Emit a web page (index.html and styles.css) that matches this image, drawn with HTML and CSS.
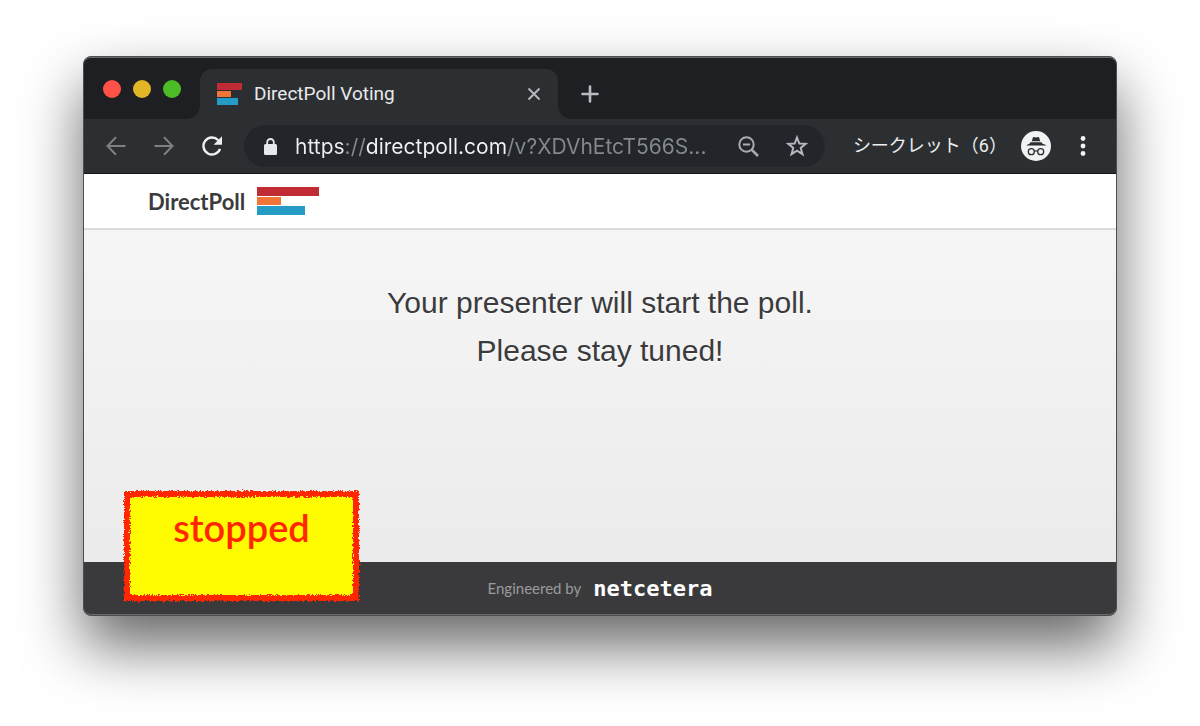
FILE: index.html
```html
<!DOCTYPE html>
<html lang="en">
<head>
    <meta charset="UTF-8">
    <meta name="viewport" content="width=device-width, initial-scale=1.0">
    <title>DirectPoll Voting</title>
    <link rel="stylesheet" href="styles.css">
</head>
<body>
    <div class="window">
        <div class="tabstrip">
            <div class="lights">
                <button class="light red" aria-label="Close window"></button>
                <button class="light yellow" aria-label="Minimize window"></button>
                <button class="light green" aria-label="Zoom window"></button>
            </div>
            <div class="tab">
                <svg class="favicon" width="25" height="22" viewBox="0 0 25 22">
                    <rect width="25" height="7" fill="#c12c34"/>
                    <rect y="8" width="14" height="6" fill="#f07536"/>
                    <rect y="15" width="21" height="7" fill="#259cc6"/>
                </svg>
                <span class="tab-title">DirectPoll Voting</span>
                <button class="icon-button" aria-label="Close tab">
                    <svg width="14" height="14" viewBox="0 0 14 14" fill="none" stroke="#b4b6ba" stroke-width="2"><path d="M1.5 1.5l11 11M12.5 1.5l-11 11"/></svg>
                </button>
            </div>
            <button class="icon-button" aria-label="New tab">
                <svg width="18" height="18" viewBox="0 0 18 18" fill="none" stroke="#b9bbc3" stroke-width="2.6" stroke-linecap="round"><path d="M9 1.5v15M1.5 9h15"/></svg>
            </button>
        </div>

        <div class="toolbar">
            <div class="nav">
                <button class="icon-button" aria-label="Back">
                    <svg width="20" height="20" viewBox="0 0 20 20" fill="none" stroke="#7e8184" stroke-width="2"><path d="M19.5 10H2M10 1.2L1.5 10l8.5 8.8"/></svg>
                </button>
                <button class="icon-button" aria-label="Forward">
                    <svg width="20" height="20" viewBox="0 0 20 20" fill="none" stroke="#7e8184" stroke-width="2"><path d="M.5 10H18M10 1.2L18.5 10 10 18.8"/></svg>
                </button>
                <button class="icon-button" aria-label="Reload">
                    <svg width="20" height="20" viewBox="0 0 20 20"><path d="M16.2 4.2A8.5 8.5 0 1 0 18 12.8" fill="none" stroke="#eef0f1" stroke-width="2.4"/><path d="M20 .3v8.4h-8.400z" fill="#eef0f1"/></svg>
                </button>
            </div>
            <div class="omnibox">
                <svg class="lock" width="13" height="17" viewBox="0 0 13 17"><rect y="6" width="13" height="11" rx="1.5" fill="#e6e8ec"/><path d="M3.2 7V4.3a3.3 3.3 0 0 1 6.6 0V7" fill="none" stroke="#e6e8ec" stroke-width="1.8"/></svg>
                <input class="url" type="text" value="https://directpoll.com/v?XDVhEtcT566S..." aria-label="Address" spellcheck="false">
                <button class="icon-button" aria-label="Page zoom">
                    <svg width="21" height="21" viewBox="0 0 21 21" fill="none" stroke="#a9acb1" stroke-width="2"><circle cx="8.5" cy="8.5" r="7.2"/><path d="M5 8.5h7"/><path d="M13.6 13.6l6.4 6.4" stroke-width="2.6"/></svg>
                </button>
                <button class="icon-button" aria-label="Bookmark">
                    <svg width="22" height="22" viewBox="0 0 22 22" fill="none" stroke="#b4b7bf" stroke-width="2"><path d="M11 2.5l2.3 6 6.5.3-5.1 4.1 1.8 6.3L11 15.6l-5.5 3.6 1.8-6.3-5.1-4.1 6.5-.3z"/></svg>
                </button>
            </div>
            <span class="incognito-label" lang="ja">シークレット（6）</span>
            <svg class="incognito" width="30" height="30" viewBox="0 0 30 30">
                <circle cx="15" cy="15" r="15" fill="#f1f3f3"/>
                <path d="M10.800 10.200l1-3.500q.3-.9 1.200-.6 2 .7 4 0 .9-.3 1.200.6l1 3.500z" fill="#2b2f32"/>
                <path d="M9.5 11.2h11l1 1.600q3 .6 3.800 1.700H5.500q.8-1.100 3-1.700z" fill="#2b2f32"/>
                <g fill="none" stroke="#2b2f32" stroke-width="1.3"><circle cx="10.300" cy="20.700" r="3"/><circle cx="19.700" cy="20.700" r="3"/><path d="M13.300 20.300q1.700-.9 3.400 0"/></g>
            </svg>
            <button class="icon-button" aria-label="Menu">
                <svg width="6" height="20" viewBox="0 0 6 20" fill="#f1f3f4"><circle cx="3" cy="2.5" r="2.4"/><circle cx="3" cy="10" r="2.4"/><circle cx="3" cy="17.5" r="2.4"/></svg>
            </button>
        </div>

        <header class="site-header">
            <a href="#" class="brand">
                <span>DirectPoll</span>
                <svg width="62" height="28" viewBox="0 0 62 28">
                    <rect width="62" height="9" fill="#c12c34"/>
                    <rect y="10" width="24" height="8" fill="#f07536"/>
                    <rect y="19" width="48" height="9" fill="#259cc6"/>
                </svg>
            </a>
        </header>

        <main class="content">
            <p class="message">Your presenter will start the poll.<br>Please stay tuned!</p>
        </main>

        <footer class="site-footer">
            <span>Engineered by</span>
            <a href="#" class="netcetera">netcetera</a>
        </footer>

        <!-- status note over the page -->
        <div class="note">
            <svg class="note-paper" width="100%" height="100%">
                <filter id="rough" x="-5%" y="-5%" width="110%" height="110%">
                    <feTurbulence type="fractalNoise" baseFrequency="0.6" numOctaves="2" seed="4" result="noise"/>
                    <feDisplacementMap in="SourceGraphic" in2="noise" scale="5" xChannelSelector="R" yChannelSelector="G"/>
                    <feGaussianBlur stdDeviation="0.3"/>
                </filter>
                <rect class="note-edge" width="100%" height="100%" filter="url(#rough)"/>
            </svg>
            <span class="note-text">stopped</span>
        </div>
    </div>
</body>
</html>
```
FILE: styles.css
```css
* {
    margin: 0;
    padding: 0;
    box-sizing: border-box;
}
body {
    display: flex;
    min-height: 100vh;
    padding: 56px 83px 110px;
    background: #fff;
    font-family: Roboto, "Noto Sans CJK JP", sans-serif;
    overflow: hidden;
}
button {
    border: none;
    background: none;
    cursor: pointer;
}
svg {
    display: block;
    flex: none;
}
.window {
    position: relative;
    flex: 1;
    display: flex;
    flex-direction: column;
    border: 1px solid #4b4e4f;
    border-radius: 8px;
    background: #3a3a3c;
    box-shadow: 0 30px 60px rgba(0, 0, 0, 0.6);
}

/* browser chrome */
.tabstrip {
    display: flex;
    align-items: flex-end;
    height: 62px;
    padding-left: 19px;
    background: #1e1f22;
    border-top: 1px solid #686b6c;
    border-radius: 7px 7px 0 0;
}
.lights {
    display: flex;
    gap: 12px;
    margin-right: 19px;
    padding-bottom: 21px;
}
.light {
    width: 18px;
    height: 18px;
    border-radius: 50%;
}
.red {
    background: #ff5148;
}
.yellow {
    background: #e1b526;
}
.green {
    background: #4bbb27;
}
.tab {
    position: relative;
    display: flex;
    align-items: center;
    width: 358px;
    height: 50px;
    margin-right: 16px;
    padding: 0 8px 0 17px;
    background: #2c2f32;
    border-radius: 12px 12px 0 0;
}
.tab::before,
.tab::after {
    content: "";
    position: absolute;
    bottom: 0;
    width: 12px;
    height: 12px;
}
.tab::before {
    right: 100%;
    background: radial-gradient(circle at 0 0, transparent 11px, #2c2f32 12px);
}
.tab::after {
    left: 100%;
    background: radial-gradient(circle at 100% 0, transparent 11px, #2c2f32 12px);
}
.tab-title {
    flex: 1;
    margin-left: 12px;
    font-size: 19px;
    line-height: 24px;
    color: #e8e9eb;
}
.icon-button {
    display: flex;
    align-items: center;
    justify-content: center;
    flex: none;
    width: 32px;
    height: 32px;
}
.tabstrip > .icon-button {
    margin-bottom: 9px;
}
.toolbar {
    display: flex;
    align-items: center;
    height: 55px;
    padding: 0 17px 0 16px;
    background: #2c2f32;
    border-bottom: 1px solid #151617;
}
.nav {
    display: flex;
    gap: 16px;
    margin-right: 16px;
}
.omnibox {
    display: flex;
    align-items: center;
    flex: 1;
    height: 42px;
    padding: 0 12px 0 20px;
    background: #22262a;
    border-radius: 21px;
}
.url {
    flex: 1;
    min-width: 0;
    margin: 0 12px 0 18px;
    border: none;
    outline: none;
    font: 21px Inter, sans-serif;
    color: transparent;
    /* scheme and path are dimmed, the host stays bright */
    background: linear-gradient(90deg, #eceef0 51px, #85898d 51px, #85898d 71px, #f1f3f4 71px, #f1f3f4 213px, #85898d 213px);
    -webkit-background-clip: text;
    background-clip: text;
}
.omnibox .icon-button + .icon-button {
    margin-left: 16px;
}
.incognito-label {
    margin: 0 14px 0 28px;
    font-size: 18px;
    line-height: 24px;
    color: #eceef0;
}
.incognito {
    margin-right: 16px;
}

/* poll page */
.site-header {
    display: flex;
    align-items: center;
    height: 54px;
    padding: 0 64px;
    background: #fff;
}
.brand {
    display: flex;
    align-items: center;
    gap: 12px;
    font: 700 22px Lato, sans-serif;
    color: #3b3b3d;
    text-decoration: none;
}
.content {
    flex: 1;
    padding: 49px 20px;
    border-top: 2px solid #dcdcdc;
    background: linear-gradient(#f6f6f6, #ebebeb);
    text-align: center;
}
.message {
    font: 30px/48px "Liberation Sans", Arial, sans-serif;
    color: #3b3b3d;
    text-shadow: 0 1px 0 #fff;
}
.site-footer {
    display: flex;
    align-items: center;
    justify-content: center;
    gap: 12px;
    height: 53px;
    border-bottom: 1px solid #69696b;
    border-radius: 0 0 7px 7px;
    background: #3a3a3c;
    font: 15px Lato, sans-serif;
    color: #9a9a9c;
}
.netcetera {
    font: 700 22px "DejaVu Sans Mono", monospace;
    color: #fff;
    text-decoration: none;
}

.note {
    position: absolute;
    left: 43px;
    bottom: 17px;
    width: 229px;
    height: 104px;
    padding-top: 5px;
    text-align: center;
}
.note-paper {
    position: absolute;
    inset: 0;
    overflow: visible;
}
.note-edge {
    fill: #fffb00;
    stroke: #ff2600;
    stroke-width: 6px;
}
.note-text {
    position: relative;
    font: 600 38px/56px Lato, sans-serif;
    color: #ff2600;
}
```
